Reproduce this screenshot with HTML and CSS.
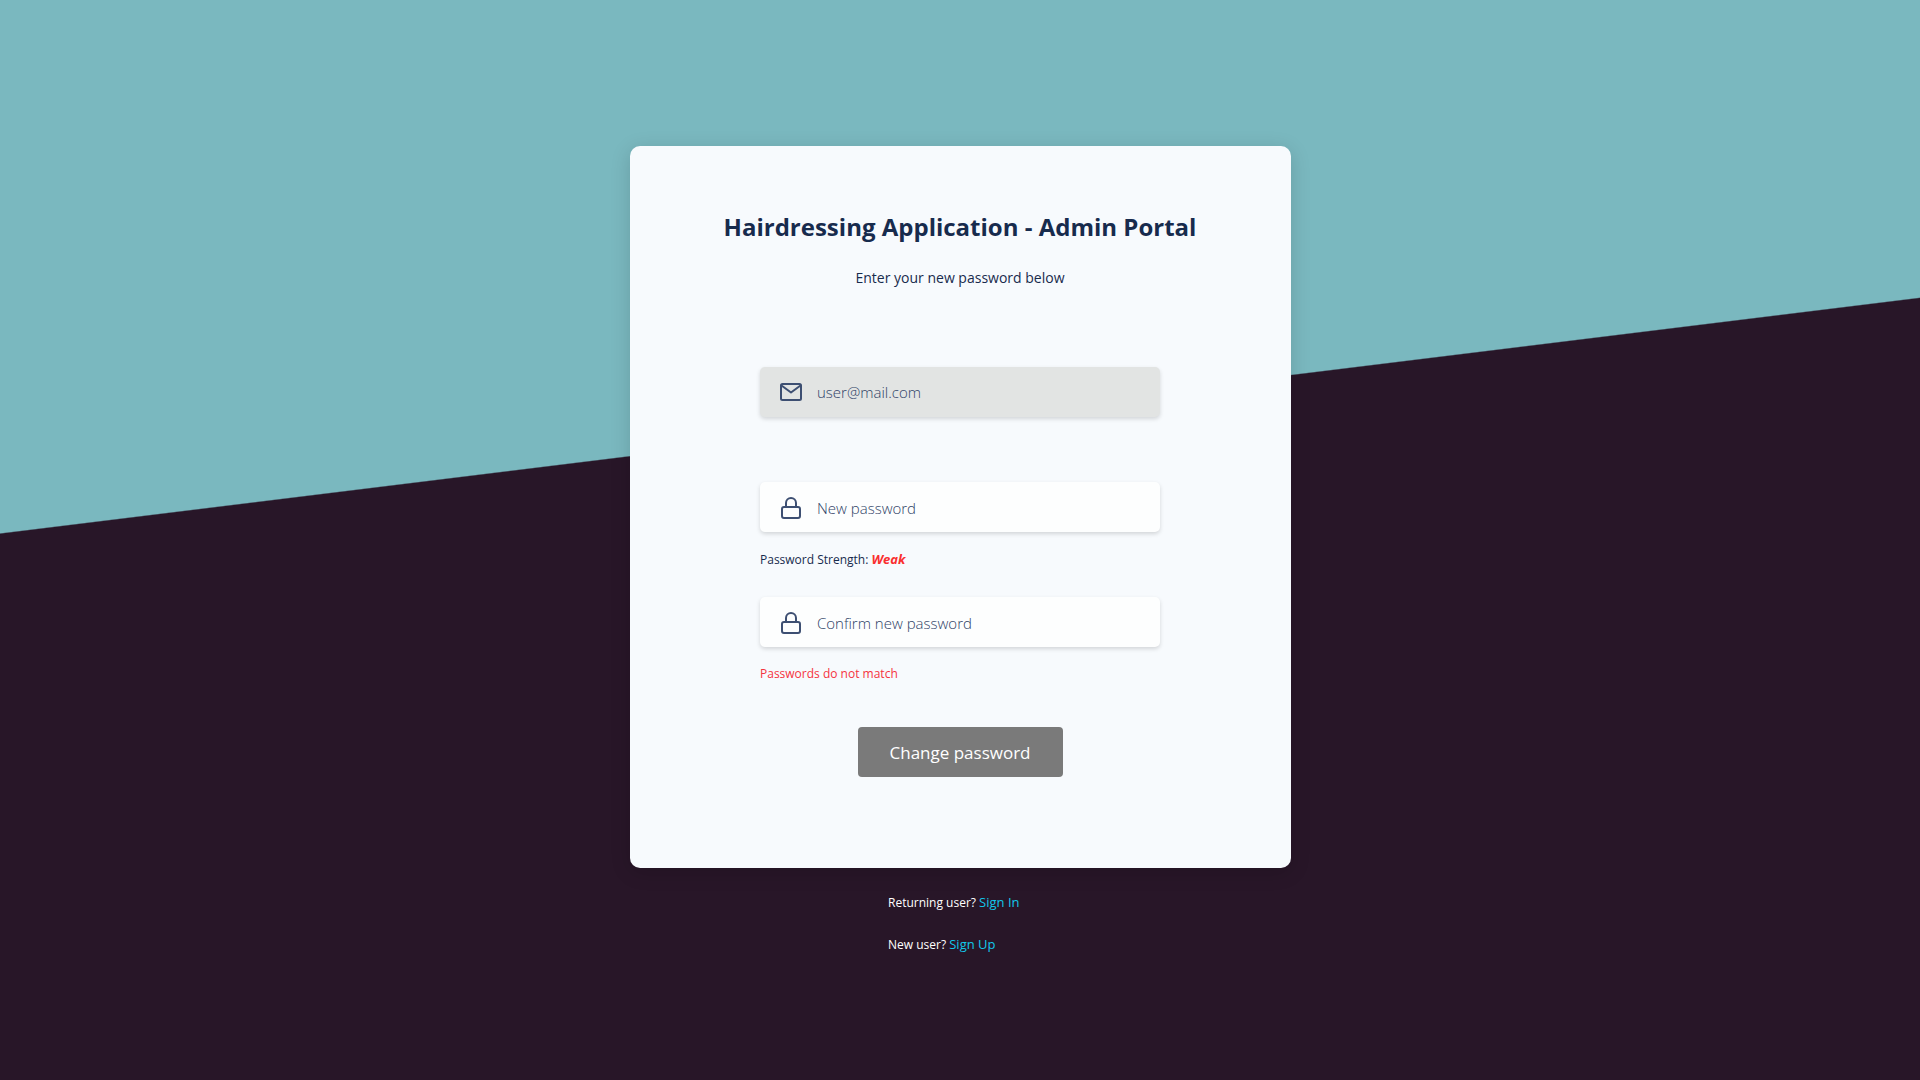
FILE: index.html
```html
<!DOCTYPE html>
<html lang="en">
<head>
  <meta charset="utf-8">
  <meta name="viewport" content="width=device-width, initial-scale=1">
  <title>Hairdressing Application - Admin Portal</title>
  <link rel="stylesheet" href="styles.css">
</head>
<body>
  <main class="page">
    <form class="card">
      <h1 class="title">Hairdressing Application - Admin Portal</h1>
      <p class="subtitle">Enter your new password below</p>

      <div class="fields">
        <div class="field">
          <label class="input-box input-box-disabled">
            <svg class="icon" viewBox="0 0 24 24" aria-hidden="true">
              <rect x="2" y="4" width="20" height="16" rx="1.500"/>
              <path d="M2.500 5.500L12 12.500l9.500-7"/>
            </svg>
            <input class="input" type="email" value="user@mail.com" aria-label="Email" disabled>
          </label>
        </div>

        <div class="field">
          <label class="input-box">
            <svg class="icon" viewBox="0 0 24 24" aria-hidden="true">
              <rect x="3" y="11" width="18" height="11" rx="2"/>
              <path d="M7 11V7a5 5 0 0 1 10 0v4"/>
            </svg>
            <input class="input" type="password" placeholder="New password" aria-label="New password">
          </label>
          <p class="hint">Password Strength: <em class="strength">Weak</em></p>
        </div>

        <div class="field">
          <label class="input-box">
            <svg class="icon" viewBox="0 0 24 24" aria-hidden="true">
              <rect x="3" y="11" width="18" height="11" rx="2"/>
              <path d="M7 11V7a5 5 0 0 1 10 0v4"/>
            </svg>
            <input class="input" type="password" placeholder="Confirm new password" aria-label="Confirm new password">
          </label>
          <p class="hint hint-error">Passwords do not match</p>
        </div>
      </div>

      <button class="submit" type="submit">Change password</button>
    </form>

    <nav class="links">
      <p class="link-row">Returning user? <a class="link" href="#">Sign In</a></p>
      <p class="link-row">New user? <a class="link" href="#">Sign Up</a></p>
    </nav>
  </main>
</body>
</html>
```
FILE: styles.css
```css
* {
  box-sizing: border-box;
}

body {
  margin: 0;
  min-height: 100vh;
  background: linear-gradient(173deg, #7ab8bf 40.5%, #281628 40.6%) no-repeat;
  color: #172b4d;
  font-family: "Open Sans", "Noto Sans", sans-serif;
}

h1,
p {
  margin: 0;
}

.page {
  display: flex;
  flex-direction: column;
  align-items: center;
  gap: 24px;
  padding: 146px 16px 48px;
}

.card {
  display: flex;
  flex-direction: column;
  align-items: center;
  width: 100%;
  max-width: 661px;
  padding: 62px 24px 91px;
  border-radius: 10px;
  background: #f7fafd;
  box-shadow: 0 4px 20px rgba(0, 0, 0, 0.15);
}

.title {
  font-size: 24px;
  line-height: 38px;
  font-weight: 700;
  text-align: center;
}

.subtitle {
  margin-top: 20px;
  font-size: 14px;
  line-height: 24px;
  font-weight: 400;
}

.fields {
  width: 100%;
  max-width: 400px;
  margin-top: 77px;
}

.field {
  min-height: 115px;
}

.input-box {
  display: flex;
  align-items: center;
  gap: 14px;
  height: 50px;
  padding: 2px 19px 0;
  border-radius: 5px;
  background: #fdfefe;
  box-shadow: 0 2px 4px rgba(0, 0, 0, 0.15);
}

.input-box-disabled {
  padding-top: 0;
  background: #e2e4e3;
}

.icon {
  flex: none;
  width: 24px;
  height: 24px;
  fill: none;
  stroke: #3d4f72;
  stroke-width: 2;
  stroke-linecap: round;
  stroke-linejoin: round;
}

.input {
  flex: 1;
  min-width: 0;
  height: 100%;
  padding: 0;
  border: 0;
  outline: 0;
  background: transparent;
  color: #2f4266;
  font: inherit;
  font-size: 15px;
  font-weight: 300;
}

.input::placeholder {
  color: #2f4266;
  opacity: 1;
}

.hint {
  margin-top: 17px;
  font-size: 12px;
  line-height: 20px;
}

.hint-error {
  color: #f5333f;
}

.strength {
  color: #fa2f2f;
  font-size: 13px;
  font-weight: 700;
}

.submit {
  height: 50px;
  margin-top: 15px;
  padding: 0 32px;
  border: 0;
  border-radius: 4px;
  background: #7a7a7a;
  color: #fff;
  font: inherit;
  font-size: 17px;
}

.links {
  display: flex;
  flex-direction: column;
  gap: 21px;
  width: 144px;
}

.link-row {
  color: #fff;
  font-size: 12px;
  line-height: 20px;
  font-weight: 500;
  white-space: nowrap;
}

.link {
  color: #12c8ea;
  font-size: 13px;
  font-weight: 400;
  text-decoration: none;
}
```
